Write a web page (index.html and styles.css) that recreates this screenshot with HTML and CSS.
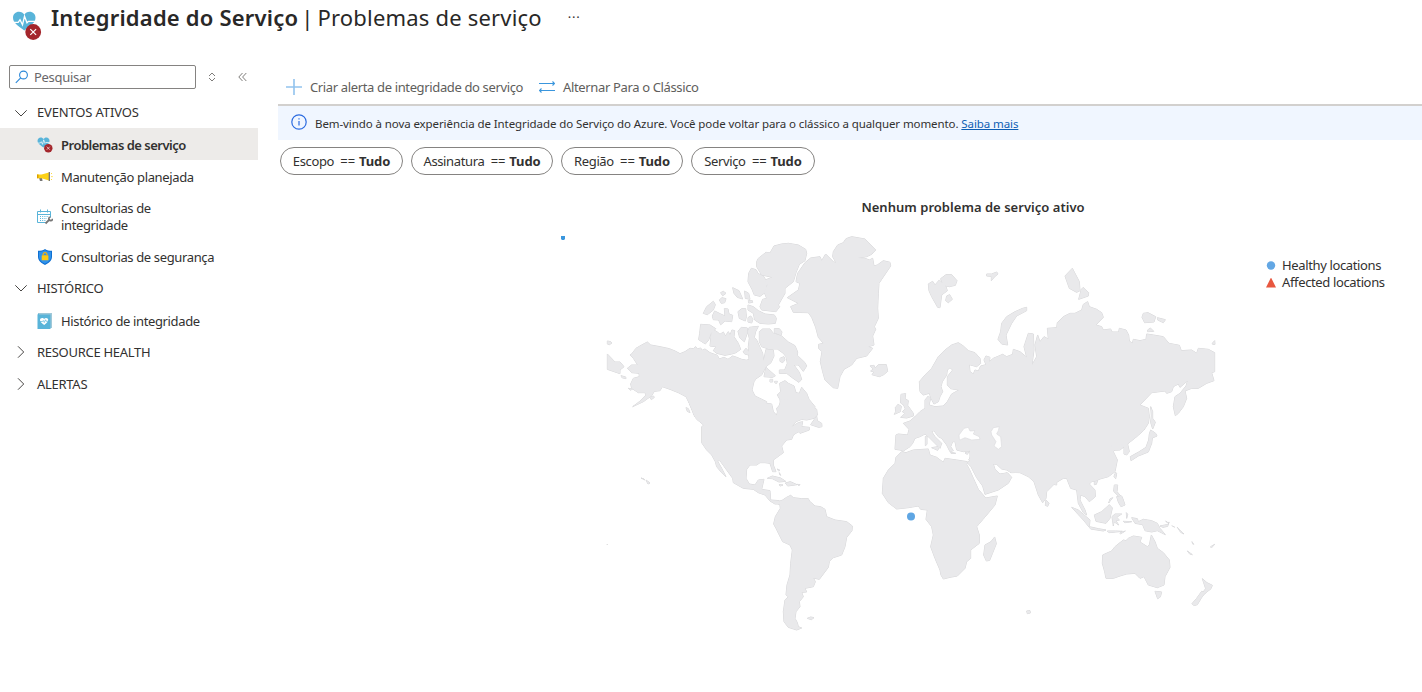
FILE: index.html
```html
<!DOCTYPE html>
<html lang="pt-BR">
<head>
<meta charset="utf-8">
<title>Integridade do Serviço</title>
<link rel="stylesheet" href="styles.css">
</head>
<body>
<svg class="defs" width="0" height="0">
  <defs>
    <symbol id="heart" viewBox="0 0 30 30">
      <path fill="#59b4d9" d="M12.300 19.500C6 15 1 12 1 6.800C1 3.200 3.600.8 7 .8c2.300 0 4.200 1 5.300 2.900C13.400 1.800 15.300.8 17.600.8c3.400 0 5.900 2.400 5.900 6 0 5.200-5 8.200-11.200 12.700z"/>
      <path fill="none" stroke="#fff" stroke-width="1.300" d="M1.500 11.300h4.700l1.800-2.500 2.500 5 2-8.500 2.500 6.500 1.500-1.500h6.500"/>
      <circle cx="21.200" cy="21" r="7.900" fill="#a4262c"/>
      <path stroke="#fff" stroke-width="1.200" d="M18.300 18.100l5.800 5.800m0-5.800l-5.800 5.800"/>
    </symbol>
  </defs>
</svg>
<header class="title">
  <svg class="title-icon" viewBox="0 0 30 30"><use href="#heart"/></svg>
  <h1><b>Integridade do Serviço</b><span class="bar">|</span><span class="sub">Problemas de serviço</span></h1>
  <span class="more">···</span>
</header>
<div class="body">
  <nav class="side">
    <div class="search-row">
      <div class="search"><svg width="14" height="14" viewBox="0 0 14 14"><circle cx="8.500" cy="5" r="3.900"/><path d="M5.700 7.900L.8 12.800"/></svg><span>Pesquisar</span></div>
      <svg class="updown" width="8" height="10" viewBox="0 0 8 10"><path d="M1 4l3-3 3 3M1 6l3 3 3-3"/></svg>
      <svg class="collapse" width="9" height="10" viewBox="0 0 9 10"><path d="M4.500 1L.8 5l3.700 4M8.300 1L4.600 5l3.700 4"/></svg>
    </div>
    <div class="group g1"><svg viewBox="0 0 12 12"><path d="M.3 3.300L6 9l5.700-5.700"/></svg><span>EVENTOS ATIVOS</span></div>
    <div class="item active"><svg class="ico" viewBox="0 0 30 30"><use href="#heart"/></svg><span>Problemas de serviço</span></div>
    <div class="item"><svg class="ico" viewBox="0 0 16 16"><path fill="#767676" d="M2 8.500h3l.5 3.500H3z"/><path fill="#fcd116" d="M0 5.500h4.500L12 3.500v8L4.500 9.300H0z"/><path fill="#dba000" d="M0 5.500h1.500v3.800H0z"/><path fill="#767676" d="M11.700 3h1.300v9h-1.300z"/><path stroke="#fcd116" stroke-width=".8" fill="none" d="M14 5l1-1m-.8 3.600h1.500M14 10l1 1"/></svg><span>Manutenção planejada</span></div>
    <div class="item two"><svg class="ico" viewBox="0 0 16 16"><path fill="none" stroke="#59b4d9" d="M8.500 13.500H.5v-11h13v6M.5 5.500h13M3.500.5v3m7-3v3"/><path stroke="#59b4d9" stroke-dasharray="1 1.200" d="M3 7.500h9M3 9.500h7M3 11.500h6"/><path stroke="#767676" stroke-width="1.800" d="M8.500 14.500L13 10"/><path fill="none" stroke="#767676" stroke-width="1.500" d="M15.500 9.700a1.900 1.900 0 1 1-2-1.800"/></svg><span>Consultorias de<br>integridade</span></div>
    <div class="item"><svg class="ico" viewBox="0 0 16 16"><path fill="#0f6fd1" d="M8 0c2 1.500 4.500 1.800 7 1.800v6c0 4-3.500 6.500-7 8.200-3.500-1.700-7-4.200-7-8.200v-6C3.500 1.800 6 1.500 8 0z"/><path fill="#2f92ec" d="M8 1.200c2 1.200 4 1.500 6 1.600v5c0 3.200-2.800 5.400-6 7-3.200-1.600-6-3.800-6-7v-5c2-.1 4-.4 6-1.600z"/><rect x="4.700" y="6.300" width="6.700" height="5" rx=".6" fill="#fcc812"/><path fill="none" stroke="#f5b10b" stroke-width="1.200" d="M6.100 6.500V5.200a2 2 0 0 1 3.900 0v1.300"/></svg><span>Consultorias de segurança</span></div>
    <div class="group"><svg viewBox="0 0 12 12"><path d="M.3 3.300L6 9l5.700-5.700"/></svg><span>HISTÓRICO</span></div>
    <div class="item"><svg class="ico" viewBox="0 0 16 16"><path fill="#a0c8d8" d="M1 0h14v15H1z"/><path fill="#59b4d9" d="M.5 1.500L2 .5v1h11.500V16H.5z"/><path fill="#fff" d="M7.200 12C4.200 9.500 3 8.300 3 6.900c0-2 3-2.700 4.100-.8 1.200-1.900 4.100-1.200 4.100.8 0 1.400-1.300 2.600-4 5.100z"/><path fill="none" stroke="#59b4d9" stroke-width=".7" d="M3 8.500h2.500L6.300 7.500l1 2L8.500 6.800l.8 1.500h2"/></svg><span>Histórico de integridade</span></div>
    <div class="group closed"><svg viewBox="0 0 12 12"><path d="M3 .3L8.700 6 3 11.700"/></svg><span>RESOURCE HEALTH</span></div>
    <div class="group closed"><svg viewBox="0 0 12 12"><path d="M3 .3L8.700 6 3 11.700"/></svg><span>ALERTAS</span></div>
  </nav>
  <main class="main">
    <div class="toolbar">
      <svg class="plus" width="16" height="16" viewBox="0 0 16 16"><path d="M8 0v16M0 8h16"/></svg><span>Criar alerta de integridade do serviço</span>
      <svg class="swap" width="16" height="12" viewBox="0 0 16 12"><path d="M0 2.500h15.500M13.500.5l2 2-2 2M16 9.500H.5M2.500 7.500l-2 2 2 2"/></svg><span>Alternar Para o Clássico</span>
    </div>
    <div class="banner">
      <svg width="16" height="16" viewBox="0 0 16 16"><circle cx="8" cy="8" r="7.200"/><path d="M8 7v4.500M8 4.200v1.400"/></svg>
      <span class="msg">Bem-vindo à nova experiência de Integridade do Serviço do Azure. Você pode voltar para o clássico a qualquer momento. <a>Saiba mais</a></span>
    </div>
    <div class="pills">
      <div class="pill p1"><span>Escopo</span><i>==</i><b>Tudo</b></div>
      <div class="pill p2"><span>Assinatura</span><i>==</i><b>Tudo</b></div>
      <div class="pill p3"><span>Região</span><i>==</i><b>Tudo</b></div>
      <div class="pill p4"><span>Serviço</span><i>==</i><b>Tudo</b></div>
    </div>
    <h2><span>Nenhum problema de serviço ativo</span></h2>
    <div class="map-row">
      <svg class="map" width="660" height="400" viewBox="560 233 660 400">
        <defs>
          <g id="land">
            <g transform="translate(600 230) scale(.33333)">
              <path d="M90 375L95 372 108 355 125 345 142 336 152 345 180 350 208 356 225 363 240 371 255 365 270 355 280 356 287 350 292 357 302 354 306 361 315 357 330 368 352 376 358 387 372 382 384 388 398 378 410 382 425 388 447 392 480 392 500 400 480 430 462 455 456 480 465 498 500 515 500 620 310 620 312 588 305 575 285 560 277 540 268 520 258 500 235 488 210 478 187 470 180 482 163 484 155 497 130 515 98 530 118 515 138 495 135 488 115 488 95 475 92 462 100 445 118 440 117 430 95 428 82 415 95 405 113 405 100 385Z"/>
              <path d="M22 372L45 396 60 396 72 410 60 420 60 431 22 418ZM22 333l10 2 4 4-8 5-6-2ZM63 437l14 4 1 5-12-3ZM85 475l12 2-4 4ZM150 502l10-4 3 4-9 7ZM258 533l7 3 5 12-8-4ZM282 558l18 8 14 20-18-14Z"/>
              <path d="M302 283L330 285 347 296 333 310 326 330 316 342 296 329 299 310ZM342 300L352 306 360 313 370 306 376 318 385 305 390 315 396 300 404 302 402 320 415 340 422 358 408 368 395 372 375 376 350 370 340 362 348 350 330 348 334 310Z"/>
              <path d="M310 250L320 230 340 214 346 224 340 240 322 254ZM337 258L344 243 362 252 375 258 373 236 384 237 387 252 398 256 395 275 375 273 362 284 356 270 340 269ZM362 188l8-4 8 6-10 7ZM358 210l8-7 12 3-4 12-10 2ZM398 173L417 182 428 207 412 202 402 190ZM434 183L446 190 450 208 436 205ZM445 212l12 0 1 5-12 2ZM414 245L425 236 437 236 439 260 436 273 418 265ZM444 263l8-5 7 9-4 12-11-3ZM414 304l10-12 18 2 0 15-9 26-14-12ZM430 365l8-10 10 12-2 8-12-3Z"/>
            </g>
            <g transform="translate(690 230) scale(.33333)">
              <path d="M178 292L205 289 197 305 193 322 200 330 210 352 218 370 221 392 225 372 228 358 250 360 252 378 243 398 228 410 215 435 200 445 150 400 177 388 175 350 178 325 173 305Z"/>
              <path d="M174 225L190 230 205 242 225 252 253 255 259 265 256 280 235 282 210 280 194 270 190 250 174 240ZM184 115L198 119 204 130 222 140 232 160 225 188 210 199 193 195 186 178 174 155 176 130Z"/>
              <path d="M200 95L205 85 228 67 240 69 252 48 275 42 295 40 325 45 347 58 350 70 345 92 328 103 318 128 310 155 285 175 285 190 265 225 269 230 258 245 215 240 210 230 218 208 230 205 222 185 232 165 225 150 247 142 215 135 200 110Z"/>
              <path d="M208 305L218 297 240 297 250 310 275 318 295 336 315 347 323 366 322 376 345 398 350 408 340 424 325 405 312 405 328 427 335 448 327 457 305 442 290 430 268 430 268 420 284 420 292 400 288 380 280 370 262 357 235 357 215 350 208 335ZM253 296l15 0 8 10-3 10-20-8ZM270 385l12-5 3 10-7 8-8-4ZM228 412l28 25-8 5-26-2ZM240 448l8 0 0 8-8 0ZM254 454l8 0-2 6-5-1Z"/>
              <path d="M292 203L325 180 330 160 318 155 323 130 345 98 362 84 390 80 395 92 407 72 430 95 438 98 428 80 430 65 443 45 460 38 468 26 485 20 525 27 557 60 545 73 530 80 503 84 525 85 538 90 548 85 552 108 562 105 580 92 600 97 602 108 575 148 567 160 565 190 563 235 565 265 553 290 557 298 548 318 552 345 535 350 548 355 530 378 500 385 485 405 462 418 450 440 443 475 430 473 405 450 398 425 391 395 396 365 386 355 386 343 400 340 385 322 377 292 365 262 355 248 310 247 302 230 325 220Z"/>
              <path d="M540 408l12-2 3 8 10-10 24 0 4 20-12 10-13 6-22-6 6-8-10-3 8-6Z"/>
              <path d="M272 512L262 495 272 485 269 460 285 452 295 460 312 468 318 488 328 490 335 472 350 490 357 508 375 530 370 550 260 555Z"/>
            </g>
            <g transform="translate(690 400) scale(.33333)">
              <path d="M-5 0L218 0 225 10 245 12 250 35 260 46 263 38 260 25 272 12 270 0 350 -2 365 20 380 28 382 45 372 55 350 60 335 58 318 65 305 80 325 68 338 65 335 80 358 82 358 90 330 100 325 95 310 105 305 118 290 120 275 138 280 158 250 180 250 195 258 215 248 215 240 190 225 188 210 188 200 195 180 195 170 208 168 235 178 252 195 255 205 240 222 238 215 268 240 272 242 300 268 302 272 314 262 312 255 312 240 303 225 285 205 278 190 268 160 265 130 248 128 235 110 210 90 182 82 182 95 205 108 230 95 218 80 200 76 185 65 165 50 150 35 128 35 80 42 75 20 58 12 45 0 15Z"/>
              <path d="M380 48L382 62 395 70 396 80 386 82 362 74ZM232 235l15-7 25 6 15 10-20 2-20-10ZM286 249l15-4 20 9-28 4ZM267 254l12 1-8 3ZM322 253l8 1-3 3ZM262 207l8 4-4 2ZM268 218l4 8-3-2Z"/>
              <path d="M268 304L278 300 290 292 302 286 310 293 335 296 355 296 358 303 375 318 392 320 405 328 410 350 435 360 470 365 487 378 486 392 470 412 465 440 455 465 430 473 418 485 415 502 388 538 370 534 376 545 370 560 345 565 350 576 335 577 340 590 328 605 330 620 318 635 315 655 322 668 325 680 335 684 320 690 295 682 282 665 280 635 285 600 295 590 288 585 291 555 300 525 302 490 307 450 300 435 278 425 258 385 251 372 256 350 271 325ZM352 655l10-4 10 2-8 6Z"/>
            </g>
            <g transform="translate(860 260) scale(.33333)">
              <path d="M190 405L180 395 178 365 195 345 215 325 235 290 255 270 275 255 295 248 310 258 325 272 345 278 360 295 362 310 350 320 328 314 330 335 340 342 345 330 355 333 362 318 378 314 372 300 378 288 390 292 388 305 400 295 428 283 440 290 458 283 460 268 480 275 498 290 520 320 560 320 560 600 326 600 332 590 330 572 310 575 290 570 285 545 278 545 272 560 280 572 270 575 260 555 245 535 235 530 222 512 215 515 225 530 245 550 240 565 230 555 205 530 195 522 180 530 165 535 158 550 150 560 130 573 120 570 105 568 108 525 115 522 143 525 147 508 130 490 150 483 165 470 180 455 195 445 195 420 205 408 212 415 207 435 225 440 250 438 262 425 275 402 297 390 272 386 262 375 262 350 278 330 270 323 262 330 260 345 247 365 243 380 248 395 240 410 235 425 222 432 213 415 208 400Z"/>
              <path d="M123 403l14-2-2 15 10 6-2 14 17 24 0 8-20 6-18-2 12-12-7-5 9-8-5-12-9-6ZM106 443l8-10 10 6-3 16-18 8 4-8ZM205 72L218 64 225 75 238 60 258 80 262 92 245 105 240 143 233 142 215 110 207 92ZM242 56L258 44 275 44 291 62 286 76 268 80 250 76ZM260 108l9-4 8 14-12 10-8-6ZM380 42l15 0 15-6 4 6-10 8-10 12 0-13-14-1ZM500 142L500 152 470 168 455 190 438 225 443 255 425 252 414 238 422 215 425 190 440 170 465 155 488 145ZM196 530l5-2 0 25-5 4ZM215 563l24-4-6 12ZM272 577l15 3-14 0ZM315 579l13-5-6 9Z"/>
            </g>
            <g transform="translate(1020 260) scale(.33333)">
              <path d="M0 280L20 292 12 260 25 220 40 222 42 270 36 315 50 290 45 255 53 225 60 245 72 230 85 237 82 205 110 203 112 188 130 170 150 160 165 160 185 150 190 133 203 125 208 140 230 148 245 158 250 172 228 195 245 200 250 210 272 207 276 216 296 216 298 205 318 210 326 225 328 243 337 250 340 238 360 242 378 238 380 222 400 225 430 230 447 250 478 256 484 272 515 270 530 280 535 265 565 268 584 278 584 335 575 338 582 362 560 370 535 385 515 385 495 393 500 415 490 440 475 460 466 467 460 440 465 410 480 400 498 378 503 362 480 382 475 372 460 380 455 395 440 400 435 393 395 398 360 435 385 445 388 470 385 490 372 510 350 530 300 570 0 580Z"/>
              <path d="M135 48L157 25 178 65 180 92 170 97 148 85ZM184 88L190 82 206 98 205 108 176 118ZM366 172L370 160 384 158 407 170 402 186 374 188ZM412 173l24 6-6 9-17-8ZM383 210l8-6 10 10-18 1ZM577 250l7-8 1 11-7 0ZM392 440l6 15 0 20 8 12-8 20-6-20 2-20Z"/>
            </g>
            <g transform="translate(870 430) scale(.33333)">
              <path d="M95 65L108 68 130 60 175 57 180 75 200 82 220 97 225 85 260 90 292 95 290 103 298 118 310 145 325 178 342 198 347 204 382 198 375 225 350 255 320 290 328 315 328 340 302 360 302 385 290 395 285 415 262 438 240 442 220 447 213 435 210 420 195 385 182 350 190 315 185 290 168 268 172 240 152 238 145 228 115 233 80 237 55 218 37 190 40 145 55 120 75 100 78 82Z"/>
              <path d="M300 40L560 0 560 165 490 150 470 128 450 127 425 128 410 120 395 117 380 103 370 102 375 118 390 132 403 130 412 128 425 142 415 160 385 180 345 193 338 168 320 143 303 110 292 98 300 92Z"/>
              <path d="M374 321l5 20-12 30-8 20-10 2-8-18 4-30 18-10ZM528 210l9 10-4 9-7-3ZM470 543l10-1 1 7-9 2Z"/>
            </g>
            <g transform="translate(1020 430) scale(.33333)">
              <path d="M-60 -60L380 -60 372 0 350 18 322 38 328 65 320 75 312 72 312 52 300 40 285 38 270 48 288 55 280 65 292 90 285 125 265 140 240 147 228 152 215 155 208 162 225 180 226 200 208 215 195 200 182 195 180 210 195 240 200 255 190 248 175 220 170 180 152 175 140 145 130 145 105 160 80 185 78 205 68 218 55 195 42 155 25 140 0 128 -30 127 -60 90Z"/>
              <path d="M392 0l15 10 4 8-14 6-2 16-10 26-30 12-22 14-2-12 25-14 22-14 8-22 2-18ZM287 127l3 4-3 15-5-7ZM223 155l10-4-4 12-6 1ZM283 165l10 0-2 20 12 14-8-1-14-14ZM290 200l15-2 5 12 5 15-12 5-8-14ZM278 203l-12 16 4-12ZM155 232L175 240 210 270 208 290 235 296 258 300 250 303 212 297 190 270ZM223 255L245 245 268 224 277 234 270 265 258 280 228 274ZM276 260L285 252 305 252 290 262 298 270 288 272 296 285 282 275 280 288ZM319 248l4 5-3 12ZM310 274l25 1-20 3ZM262 303l25 0 20 1-40 4ZM300 309l16-6-15 9ZM335 263L352 266 355 275 370 268 395 272 412 280 420 295 436 314 412 302 395 306 375 302 368 284 345 280ZM420 288l25-5 2-7-4 13-14 3ZM437 273l8 6-2 0ZM455 287l10 5M472 292l20 20-10-5ZM516 335l5 8-3-1ZM502 363l15 11-8-2ZM572 350l12-7-10 11Z"/>
              <path d="M248 375L275 363 285 350 310 330 318 332 325 325 340 318 365 322 360 336 382 350 388 345 394 315 405 335 412 355 430 368 448 390 450 412 435 440 432 465 412 473 385 465 372 440 360 445 345 430 320 432 300 438 280 445 258 445 254 425 247 400ZM405 484l20 2-4 15-8 5ZM547 446l14 12 16 8-4 10-20 16-2-8 6-8ZM545 484l11 4-12 16-12 20-10 3-6-6 14-16Z"/>
            </g>
            <path d="M641 478l3 1 1 1zm5 2l4 3-2 1zM607 544l.5.5-.5.2z"/>
          </g>
        </defs>
        <use href="#land" class="coast"/>
        <use href="#land" class="ground"/>
        <g class="sea" transform="translate(860 260) scale(.33333)"><path d="M298 538L297 525 312 505 325 502 330 513 345 512 340 522 358 530 360 538 335 540 315 533 300 540ZM393 515L400 503 418 500 415 512 410 522 422 530 425 560 415 568 402 558 408 545 395 525Z"/></g>
        <circle cx="911" cy="516.500" r="4" fill="#5fa6e3"/>
        <path d="M561 236h4v3l-1 1h-2l-1-1z" fill="#3a96dd"/>
      </svg>
      <div class="legend">
        <div><svg width="10" height="10" viewBox="0 0 10 10"><circle cx="5" cy="4.500" r="4.200" fill="#63a7e4"/></svg><span>Healthy locations</span></div>
        <div><svg width="10" height="10" viewBox="0 0 10 10"><path d="M5 -.5l5 10H0z" fill="#e8573f"/></svg><span>Affected locations</span></div>
      </div>
    </div>
  </main>
</div>
</body>
</html>
```
FILE: styles.css
```css
* { box-sizing: border-box; }
body { margin: 0; width: 1422px; height: 692px; overflow: hidden; background: #fff; color: #323130; font: 13px/17px "Noto Sans", "Open Sans", sans-serif; letter-spacing: -.36px; }
svg { flex: none; display: block; }
span, b, i { white-space: nowrap; }
.defs { position: absolute; }
.title { display: flex; height: 65px; padding-left: 12px; }
.title-icon { width: 30px; height: 30px; margin-top: 11px; }
h1 { margin: 2px 0 0 9px; font-size: 22px; line-height: 30px; font-weight: 400; color: #292827; display: flex; letter-spacing: .19px; }
h1 b { font-weight: 600; }
.bar { margin: 0 4px 0 3px; }
.more { margin: 9px 0 0 26px; line-height: 17px; letter-spacing: .8px; }
.body { display: flex; }
.side { width: 258px; flex: none; }
.search-row { display: flex; align-items: center; height: 24px; padding-left: 9px; }
.search { width: 187px; height: 24px; border: 1px solid #858381; border-radius: 2px; display: flex; align-items: center; gap: 5px; padding-left: 5px; color: #69676a; letter-spacing: -.3px; }
.search svg { fill: none; stroke: #2b88d8; stroke-width: 1.1; }
.updown { margin-left: 12px; }
.collapse { margin-left: 22px; }
.updown, .collapse { fill: none; stroke: #706e6c; stroke-width: .9; }
.group { height: 32px; display: flex; align-items: center; padding-left: 15px; gap: 10px; letter-spacing: -.28px; }
.group.g1 { height: 39px; padding-top: 8px; letter-spacing: -.15px; }
.group svg { width: 12px; height: 12px; fill: none; stroke: #484644; }
.item { height: 32px; display: flex; align-items: center; padding: 2px 0 0 37px; gap: 8px; }
.item.two { height: 48px; }
.item.active { background: #edebe9; font-weight: 600; letter-spacing: -.5px; }
.ico { width: 16px; height: 16px; }
.main { flex: 1; margin-left: 20px; display: flex; flex-direction: column; }
.toolbar { height: 41px; padding: 4px 0 0 8px; display: flex; align-items: center; border-bottom: 2px solid #d2d0ce; color: #605e5c; }
.toolbar span { padding-top: 2px; }
.plus { stroke: #92c3ee; stroke-width: 1.6; margin-right: 8px; }
.swap { fill: none; stroke: #3a96dd; stroke-width: 1.1; margin: 0 8px 0 16px; }
.banner { height: 34px; background: #f0f6ff; padding-left: 13px; display: flex; align-items: center; gap: 8px; font-size: 11.5px; letter-spacing: -.088px; }
.banner svg { fill: none; stroke: #2b6be0; stroke-width: 1.2; margin-top: -3px; }
.banner a { color: #0f5fb4; text-decoration: underline; }
.pills { display: flex; gap: 8px; padding: 7px 0 0 2px; }
.pill { height: 28px; border: 1px solid #858381; border-radius: 14px; display: flex; align-items: center; justify-content: center; }
.pill i { margin: 0 4px 0 6px; letter-spacing: 0; }
.pill b { letter-spacing: -.1px; }
.p1 { width: 123px; } .p2 { width: 142px; } .p3 { width: 122px; } .p4 { width: 124px; }
h2 { margin: 23px 0 0; padding-left: 246px; text-align: center; font-size: 13px; line-height: 18px; font-weight: 600; letter-spacing: .03px; }
.map-row { display: flex; padding: 17px 0 0 282px; }
.map path { vector-effect: non-scaling-stroke; }
.coast { fill: #d8d8da; stroke: #d8d8da; stroke-width: 1px; }
.ground { fill: #e9e9eb; }
.sea { fill: #fff; stroke: #dcdcdf; stroke-width: .7px; }
.legend { margin: 24px 0 0 46px; }
.legend div { display: flex; align-items: center; gap: 6px; height: 17px; }
```
